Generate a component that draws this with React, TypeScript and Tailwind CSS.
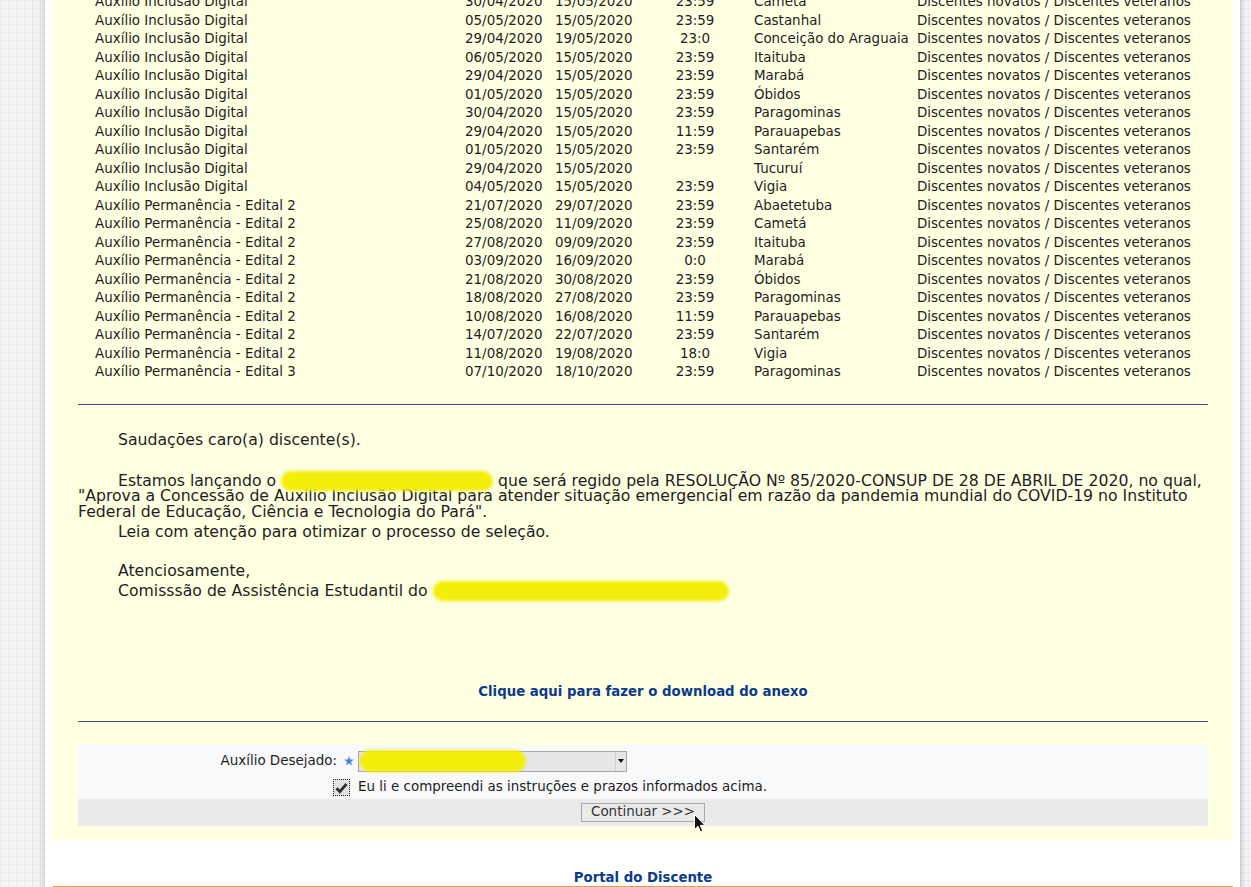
import React from "react";

type Row = [string, string, string, string, string];

const ROWS: Row[] = [
  ["Auxílio Inclusão Digital", "30/04/2020", "15/05/2020", "23:59", "Cametá"],
  ["Auxílio Inclusão Digital", "05/05/2020", "15/05/2020", "23:59", "Castanhal"],
  ["Auxílio Inclusão Digital", "29/04/2020", "19/05/2020", "23:0", "Conceição do Araguaia"],
  ["Auxílio Inclusão Digital", "06/05/2020", "15/05/2020", "23:59", "Itaituba"],
  ["Auxílio Inclusão Digital", "29/04/2020", "15/05/2020", "23:59", "Marabá"],
  ["Auxílio Inclusão Digital", "01/05/2020", "15/05/2020", "23:59", "Óbidos"],
  ["Auxílio Inclusão Digital", "30/04/2020", "15/05/2020", "23:59", "Paragominas"],
  ["Auxílio Inclusão Digital", "29/04/2020", "15/05/2020", "11:59", "Parauapebas"],
  ["Auxílio Inclusão Digital", "01/05/2020", "15/05/2020", "23:59", "Santarém"],
  ["Auxílio Inclusão Digital", "29/04/2020", "15/05/2020", "", "Tucuruí"],
  ["Auxílio Inclusão Digital", "04/05/2020", "15/05/2020", "23:59", "Vigia"],
  ["Auxílio Permanência - Edital 2", "21/07/2020", "29/07/2020", "23:59", "Abaetetuba"],
  ["Auxílio Permanência - Edital 2", "25/08/2020", "11/09/2020", "23:59", "Cametá"],
  ["Auxílio Permanência - Edital 2", "27/08/2020", "09/09/2020", "23:59", "Itaituba"],
  ["Auxílio Permanência - Edital 2", "03/09/2020", "16/09/2020", "0:0", "Marabá"],
  ["Auxílio Permanência - Edital 2", "21/08/2020", "30/08/2020", "23:59", "Óbidos"],
  ["Auxílio Permanência - Edital 2", "18/08/2020", "27/08/2020", "23:59", "Paragominas"],
  ["Auxílio Permanência - Edital 2", "10/08/2020", "16/08/2020", "11:59", "Parauapebas"],
  ["Auxílio Permanência - Edital 2", "14/07/2020", "22/07/2020", "23:59", "Santarém"],
  ["Auxílio Permanência - Edital 2", "11/08/2020", "19/08/2020", "18:0", "Vigia"],
  ["Auxílio Permanência - Edital 3", "07/10/2020", "18/10/2020", "23:59", "Paragominas"],
];

// yellow marker stroke used to hide names in the screenshot (drawn over the text, no line height of its own)
function Blot({ w, h = 18 }: { w: number; h?: number }) {
  return (
    <span className="relative inline-block h-0 align-middle" style={{ width: w }}>
      <span
        className="absolute left-0 rounded-full bg-[#f3ee0a] blur-[1.5px]"
        style={{ width: w, height: h, top: -h / 2 }}
      />
    </span>
  );
}

function Star() {
  return (
    <svg width="10" height="10" viewBox="0 0 10 10" className="shrink-0">
      <path
        d="M5 0.4 L6.3 3.6 L9.7 3.7 L7 5.8 L8 9.3 L5 7.3 L2 9.3 L3 5.8 L0.3 3.7 L3.7 3.6 Z"
        fill="#4d7ed8"
        stroke="#9fbcef"
        strokeWidth="0.5"
      />
    </svg>
  );
}

function Cursor() {
  return (
    <svg width="12" height="19" viewBox="0 0 12 19" className="absolute left-[112px] top-[10px]">
      <path
        d="M0.5 0.5 L0.5 15.5 L4 12.2 L6.6 18 L8.8 17 L6.3 11.4 L11 11.4 Z"
        fill="#111"
        stroke="#fff"
        strokeWidth="1"
      />
    </svg>
  );
}

export default function App() {
  return (
    <div className="min-h-screen bg-[#f4f4f4] bg-[linear-gradient(90deg,#e8e8e8_1px,transparent_1px),linear-gradient(#eaeaea_1px,transparent_1px)] bg-[length:8px_8px] font-['DejaVu_Sans',Verdana,sans-serif] text-[#1e1e1e]">
      <div className="ml-[45px] w-[1195px] bg-white pl-[8px] pr-[7px] shadow-[0_0_5px_2px_rgba(0,0,0,0.16)]">
        <div className="bg-[#ffffe1] px-[25px] pb-[14px]">
          {/* list of open calls (page scrolled) */}
          <div className="-mt-[7.75px] pl-[17px] text-[13.45px]">
            {ROWS.map((r, i) => (
              <div
                key={i}
                className="grid h-[18.5px] grid-cols-[370px_90px_100px_80px_182px_1fr] items-center whitespace-nowrap"
              >
                <span>{r[0]}</span>
                <span>{r[1]}</span>
                <span>{r[2]}</span>
                <span className="text-center">{r[3]}</span>
                <span className="pl-[19px]">{r[4]}</span>
                <span>Discentes novatos / Discentes veteranos</span>
              </div>
            ))}
          </div>

          <div className="mt-[22.75px] h-px bg-[#3d4c80]" />

          {/* message */}
          <div className="whitespace-nowrap text-[15.7px]">
            <div className="mt-[25px] pl-[40px] leading-[20px]">Saudações caro(a) discente(s).</div>
            <div className="mt-[23.25px] leading-[15.5px]">
              <div className="pl-[40px]">
                Estamos lançando o <Blot w={212} h={20} /> que será regido pela RESOLUÇÃO Nº 85/2020-CONSUP DE 28
                DE ABRIL DE 2020, no qual,
              </div>
              <div>
                "Aprova a Concessão de Auxílio Inclusão Digital para atender situação emergencial em razão da
                pandemia mundial do COVID-19 no Instituto
              </div>
              <div>Federal de Educação, Ciência e Tecnologia do Pará".</div>
            </div>
            <div className="mt-[2.25px] pl-[40px] leading-[20px]">
              Leia com atenção para otimizar o processo de seleção.
            </div>
            <div className="mt-[19px] pl-[40px] leading-[20px]">Atenciosamente,</div>
            <div className="pl-[40px] leading-[20px]">
              Comisssão de Assistência Estudantil do <Blot w={296} h={20} />
            </div>
          </div>

          <div className="mt-[82px] text-center text-[13.3px] font-bold leading-[18px] text-[#0b3a8e]">
            Clique aqui para fazer o download do anexo
          </div>

          <div className="mt-[20px] h-px bg-[#474f6f]" />

          {/* form */}
          <div className="mt-[23px] text-[13.45px]">
            <div className="bg-[#f8f9fb]">
              <div className="flex h-[30px] items-center pt-[3px]">
                <span className="w-[259px] text-right">Auxílio Desejado:</span>
                <span className="ml-[7px]">
                  <Star />
                </span>
                <div className="relative ml-[4px] flex h-[21px] w-[269px] items-center border border-[#a7a7a7] bg-[#e6e6e6]">
                  <span className="absolute left-[1px] top-[-2px] h-[22px] w-[166px] rounded-full bg-[#f3ee0a] blur-[1.5px]" />
                  <span className="ml-auto flex h-full w-[11px] items-center justify-center border-l border-[#cfcfcf]">
                    <svg width="6" height="4" viewBox="0 0 6 4">
                      <path d="M0 0 L6 0 L3 4 Z" fill="#111" />
                    </svg>
                  </span>
                </div>
              </div>
              <div className="flex h-[24px] items-center pt-[2px] pl-[255px]">
                <span className="flex h-[17px] w-[17px] items-center justify-center border border-dotted border-[#222] bg-[#e2e2e2]">
                  <svg width="13" height="12" viewBox="0 0 13 12">
                    <path d="M1.5 6.3 L4.8 9.6 L11.5 2" fill="none" stroke="#2d2d2d" strokeWidth="2.8" />
                  </svg>
                </span>
                <span className="ml-[8px]">Eu li e compreendi as instruções e prazos informados acima.</span>
              </div>
            </div>
            <div className="flex h-[27px] items-center justify-center bg-[#eaeaea] pt-[1px]">
              <span className="relative flex h-[19px] w-[124px] items-center justify-center border border-[#a9a9a9] text-[#333]">
                Continuar &gt;&gt;&gt;
                <Cursor />
              </span>
            </div>
          </div>
        </div>

        <div className="mt-[29px] border-b-2 border-[#e59f3e] text-center text-[13.3px] font-bold leading-[17px] text-[#0b3a8e]">
          Portal do Discente
        </div>
      </div>
    </div>
  );
}
